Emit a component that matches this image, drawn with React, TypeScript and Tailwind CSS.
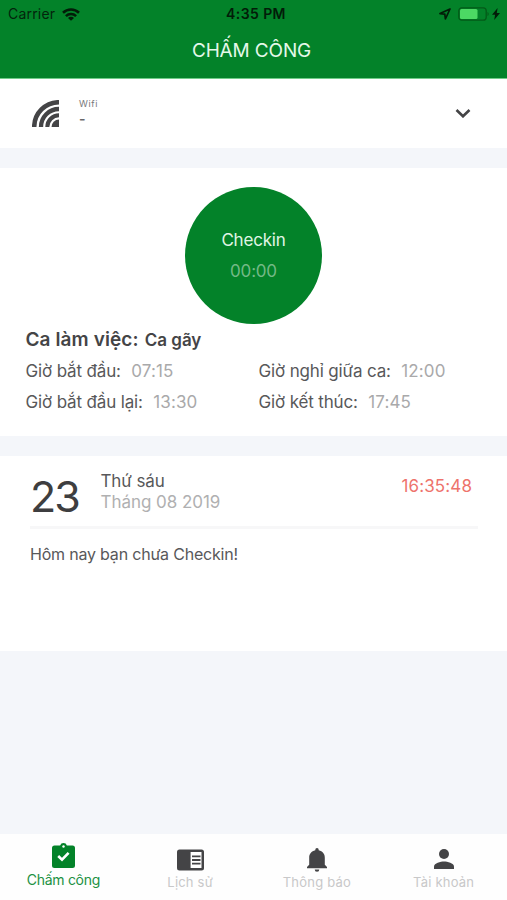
import type { ReactNode } from "react";

function StatusBar() {
  return (
    <div className="flex h-[28px] items-center text-[14px] leading-[28px] text-[#03240c]">
      <div className="flex w-[169px] items-center pl-[8px]">
        <span className="tracking-[0.2px]">Carrier</span>
        <svg className="ml-[7px] h-[13px] w-[18px]" viewBox="0 0 18 13" fill="none" stroke="#021c08" strokeWidth="2.6">
          <path d="M1 4.8a11.500 11.500 0 0 1 16 0M3.900 8.100a7.400 7.400 0 0 1 10.200 0" />
          <path d="M9 12.700 6 9.900a4.200 4.200 0 0 1 6 0Z" fill="#021c08" stroke="none" />
        </svg>
      </div>
      <div className="w-[174px] text-center font-semibold tracking-[0.4px] text-[#021c08]">4:35 PM</div>
      <div className="flex flex-1 items-center pl-[96px]">
        <svg className="h-[12px] w-[12px]" viewBox="0 0 12 12" fill="none" stroke="#021c08" strokeWidth="1.700" strokeLinejoin="round">
          <path d="M11 1 1 5.600l4.800.600L6.400 11Z" />
        </svg>
        <svg className="ml-[7px] h-[14px] w-[31px]" viewBox="0 0 31 14">
          <rect x="0.800" y="0.800" width="27.400" height="12.400" rx="3" fill="none" stroke="#045a18" strokeWidth="1.300" />
          <rect x="2" y="2" width="17.500" height="10" rx="1.500" fill="#4cd964" />
          <path d="M29.500 5v4q1.200-.7 1.200-2t-1.200-2" fill="#045a18" />
        </svg>
        <svg className="ml-[3px] h-[12px] w-[8px]" viewBox="0 0 8 12" fill="#021c08">
          <path d="M5.600 0 0 6.800h3.100L2.200 12 8 4.900H4.800Z" />
        </svg>
      </div>
    </div>
  );
}

function ShiftTime({ label, value }: { label: string; value: string }) {
  return (
    <div className="flex gap-[10.500px] whitespace-nowrap text-[17px] leading-[31px]">
      <span className="tracking-[-0.15px] text-[#58585a]">{label}</span>
      <span className="tracking-[0.1px] text-[#a9a9aa]">{value}</span>
    </div>
  );
}

function Tab({ label, active, children }: { label: string; active?: boolean; children: ReactNode }) {
  return (
    <div className="flex flex-1 flex-col items-center">
      <div className={active ? "flex h-[36px] items-end pb-[2px]" : "flex h-[39px] items-end pb-[1px]"}>{children}</div>
      <span
        className={
          active
            ? "whitespace-nowrap text-[14px] leading-[20px] tracking-[-0.3px] text-[#229143]"
            : "whitespace-nowrap text-[13px] leading-[18px] tracking-[0.200px] text-[#c8c8c9]"
        }
      >
        {label}
      </span>
    </div>
  );
}

export default function App() {
  return (
    <div className="flex h-[900px] w-[507px] flex-col overflow-hidden bg-[#f4f6fa] font-['Inter','Liberation_Sans',sans-serif]">
      <header className="h-[79px] shrink-0 border-b border-[#70cc88] bg-[#038229]">
        <StatusBar />
        <h1 className="pr-[4px] text-center text-[19px] leading-[46px] tracking-[-0.15px] text-[#e5f8e9]">CHẤM CÔNG</h1>
      </header>

      <section className="flex h-[69px] shrink-0 items-center bg-white pl-[32px] pr-[36px]">
        <svg className="h-[27px] w-[27px]" viewBox="0 0 27 27" fill="none" stroke="#444446" strokeWidth="4.500">
          <path d="M2.200 27A24.800 24.800 0 0 1 27 2.200" />
          <path d="M9 27A18 18 0 0 1 27 9" strokeWidth="4.300" />
          <path d="M15.300 27A11.700 11.700 0 0 1 27 15.300" strokeWidth="4" />
          <path d="M19.500 27A7.500 7.500 0 0 1 27 19.500V27Z" fill="#444446" stroke="none" />
        </svg>
        <div className="ml-[20px] flex flex-1 flex-col pb-[3px]">
          <div className="text-[9px] leading-[12px] tracking-[0.6px] text-[#77777a]">Wifi</div>
          <div className="text-[14px] font-semibold leading-[17px] text-[#68686a]">-</div>
        </div>
        <svg className="h-[9px] w-[16px]" viewBox="0 0 16 9" fill="none" stroke="#444446" strokeWidth="2.600">
          <path d="m1.500 1 6.500 6.300L14.500 1" />
        </svg>
      </section>

      <section className="mt-[20px] h-[268px] shrink-0 bg-white pt-[18.500px]">
        <div className="mx-auto flex h-[137px] w-[137px] flex-col items-center rounded-full bg-[#038229] pt-[38px]">
          <span className="text-[17px] leading-[31px] tracking-[-0.2px] text-[#e0f6e5]">Checkin</span>
          <span className="text-[17px] leading-[31px] tracking-[-0.2px] text-[#73b986]">00:00</span>
        </div>
        <div className="pl-[25.500px] pt-[0.500px]">
          <h2 className="flex items-baseline gap-[6px] whitespace-nowrap font-semibold leading-[32px] text-[#444446]">
            <span className="text-[19px] tracking-[0.1px]">Ca làm việc:</span>
            <span className="text-[17px]">Ca gãy</span>
          </h2>
          <div className="grid grid-cols-[233px_1fr]">
            <ShiftTime label="Giờ bắt đầu:" value="07:15" />
            <ShiftTime label="Giờ nghỉ giữa ca:" value="12:00" />
            <ShiftTime label="Giờ bắt đầu lại:" value="13:30" />
            <ShiftTime label="Giờ kết thúc:" value="17:45" />
          </div>
        </div>
      </section>

      <section className="mt-[20px] h-[195px] shrink-0 bg-white pl-[30px] pr-[29px]">
        <div className="flex h-[73px] border-b-[3px] border-[#f7f7f8]">
          <div className="w-[70.500px] pt-[15px] text-[43px] leading-[50px] tracking-[-2px] text-[#3e3e40]">23</div>
          <div className="flex-1 whitespace-nowrap pt-[15px] text-[17px] leading-[21px]">
            <div className="tracking-[-0.1px] text-[#58585a]">Thứ sáu</div>
            <div className="tracking-[-0.05px] text-[#b0b0b1]">Tháng 08 2019</div>
          </div>
          <div className="pr-[6px] pt-[15px] text-[17px] leading-[31px] tracking-[0.1px] text-[#ee736c]">16:35:48</div>
        </div>
        <p className="pt-[10px] text-[16px] leading-[31px] tracking-[-0.2px] text-[#58585a]">Hôm nay bạn chưa Checkin!</p>
      </section>

      <nav className="mt-auto flex h-[66px] shrink-0 bg-[#fefefe]">
        <Tab label="Chấm công" active>
          <svg className="h-[25px] w-[23px]" viewBox="0 0 23 25">
            <path fill="#038229" d="M2.500 2.500h5.600a3.600 3.600 0 0 1 6.800 0h5.600A2.500 2.500 0 0 1 23 5v17.500a2.500 2.500 0 0 1-2.500 2.500h-18A2.500 2.500 0 0 1 0 22.500V5A2.500 2.500 0 0 1 2.500 2.500Z" />
            <circle cx="11.500" cy="3.500" r="1.200" fill="#fff" />
            <path d="m6.200 13 3.800 3.700 6.600-6.900" fill="none" stroke="#fff" strokeWidth="2.600" />
          </svg>
        </Tab>
        <Tab label="Lịch sử">
          <svg className="mb-[1px] h-[22px] w-[27px]" viewBox="0 0 27 22">
            <rect x="0" y="0.500" width="27" height="21" rx="2.500" fill="#444446" />
            <path fill="#fff" d="M13.600 3H24.500V19H13.600Z" />
            <path d="M15 7.300h8.500M15 11h8.500M15 14.700h8.500" stroke="#444446" strokeWidth="1.800" />
          </svg>
        </Tab>
        <Tab label="Thông báo">
          <svg className="h-[24px] w-[20px]" viewBox="0 0 20 24" fill="#444446">
            <path d="M10 0a1.700 1.700 0 0 1 1.700 1.700v.6c4 .8 6.100 3.700 6.100 7.500v6.900L20 19v1.300H0V19l2.200-2.300V9.800c0-3.800 2.100-6.700 6.100-7.500v-.6A1.700 1.700 0 0 1 10 0Z" />
            <path d="M7.700 21.500h4.600a2.300 2.300 0 0 1-4.600 0Z" />
          </svg>
        </Tab>
        <Tab label="Tài khoản">
          <svg className="mb-[3px] h-[20px] w-[20px]" viewBox="0 0 20 20" fill="#444446">
            <circle cx="10" cy="5" r="5" />
            <path d="M0 20v-2.500C0 14.200 6.700 12.500 10 12.500s10 1.700 10 5V20Z" />
          </svg>
        </Tab>
      </nav>
    </div>
  );
}
